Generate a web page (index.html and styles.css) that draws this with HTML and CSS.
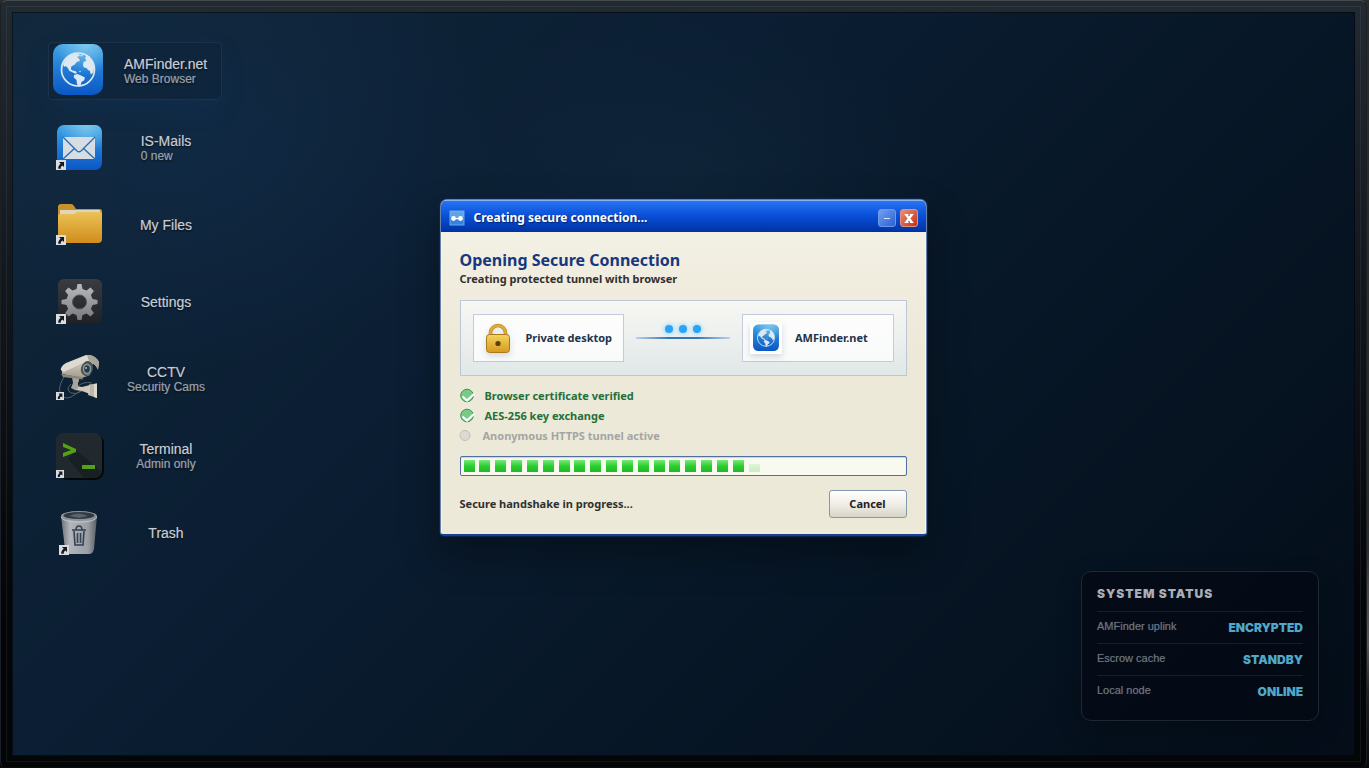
FILE: index.html
```html
<!DOCTYPE html>
<html lang="en">
<head>
<meta charset="utf-8">
<title>Private desktop</title>
<link rel="stylesheet" href="styles.css">
</head>
<body>
<svg class="defs" aria-hidden="true">
  <defs>
    <linearGradient id="blue" x1="0" y1="0" x2="0" y2="1"><stop offset="0" stop-color="#43a5e6"/><stop offset=".45" stop-color="#237fd6"/><stop offset="1" stop-color="#0b57c4"/></linearGradient>
    <radialGradient id="shine" cx=".65" cy="0" r=".6"><stop offset="0" stop-color="#8fd4ee" stop-opacity=".75"/><stop offset="1" stop-color="#8fd4ee" stop-opacity="0"/></radialGradient>
    <linearGradient id="gold" x1="0" y1="0" x2="0" y2="1"><stop offset="0" stop-color="#ebc256"/><stop offset="1" stop-color="#d08d1c"/></linearGradient>
    <linearGradient id="dark" x1="0" y1="0" x2="0" y2="1"><stop offset="0" stop-color="#393c42"/><stop offset="1" stop-color="#202226"/></linearGradient>
    <linearGradient id="steel" x1="0" y1="0" x2="0" y2="1"><stop offset="0" stop-color="#b9bbbd"/><stop offset="1" stop-color="#77797c"/></linearGradient>
    <linearGradient id="can" x1="0" y1="0" x2="1" y2="0"><stop offset="0" stop-color="#6d737a"/><stop offset=".25" stop-color="#b2b5b9"/><stop offset=".75" stop-color="#9a9ea4"/><stop offset="1" stop-color="#565d66"/></linearGradient>
    <linearGradient id="camera" x1="0" y1="0" x2="0" y2="1"><stop offset="0" stop-color="#d6d0c5"/><stop offset="1" stop-color="#a39d90"/></linearGradient>
    <symbol id="globe" viewBox="0 0 52 54">
      <rect x="1" y="1" width="50" height="51" rx="10" fill="url(#blue)"/>
      <rect x="1" y="1" width="50" height="51" rx="10" fill="url(#shine)"/>
      <circle cx="26" cy="26.500" r="16.500" fill="none" stroke="#dce8f2" stroke-width="1.700"/>
      <g fill="#dce8f2">
        <path d="M11 21l3-5 4-3.500 5-2 4 .5 1 2-3 1 2 1.500 1 2.500-3 .8-2.500 3-3 1.500-.7 2.700 1.700 1.500 3 .5 1.500 2-1.500.8-3-1.600-3-1.300-2-3.400-2-1.500-1.500 1z"/>
        <path d="M22 32l3.500-1 3.500 1.500 4 2-1 3-2.500 1.500-1 3.500-2 1.500-1.700-3.500-.3-3.500-2.700-2.500z"/>
        <path d="M31 22.500l.5-3.500 3-1.500-1.500-2 1.500-3.500 3 1.500 3.500 5 1.200 6-1 5-2.500 2-.7-3.500-2-1-1.500-2-2.500-.5z"/>
        <circle cx="29.500" cy="12.500" r="1.100"/><circle cx="28" cy="28.500" r=".8"/>
      </g>
    </symbol>
    <symbol id="shortcut" viewBox="0 0 10 10">
      <rect width="10" height="10" fill="#d9dde0"/>
      <path d="M3 2h5v5L6.400 5.500C5 6.500 4.600 7.300 4.800 8.800H2.300C2 6.600 3 5 4.700 3.800z" fill="#14181f"/>
    </symbol>
  </defs>
</svg>

<div class="monitor">
  <main class="screen">
    <nav class="shortcuts" aria-label="Desktop shortcuts">
      <a class="shortcut selected" href="#browser">
        <svg class="icon large" viewBox="0 0 52 54"><use href="#globe"/></svg>
        <span class="label"><span class="name">AMFinder.net</span><span class="note">Web Browser</span></span>
      </a>
      <a class="shortcut" href="#mails">
        <svg class="icon" viewBox="0 0 48 48">
          <rect x="1" y="1" width="45" height="45" rx="7" fill="url(#blue)"/><rect x="1" y="1" width="45" height="45" rx="7" fill="url(#shine)"/>
          <rect x="7" y="13" width="32" height="22" rx="1" fill="#d7dde3"/>
          <path d="M7 13l14 14q2 1.500 4 0l14-14M7 35l12-11M39 35L27 24" fill="none" stroke="#2771b9" stroke-width="1.400"/>
          <use href="#shortcut" x="0" y="36" width="10" height="10"/>
        </svg>
        <span class="label left"><span class="name">IS-Mails</span><span class="note">0 new</span></span>
      </a>
      <a class="shortcut" href="#files">
        <svg class="icon" viewBox="0 0 48 48">
          <path d="M2 6q0-3 3-3h10q2 0 3 2l2 3h23q3 0 3 2v8H2z" fill="#c8922a"/>
          <path d="M4 9h40v9H4z" fill="#dfd7bd"/>
          <path d="M2 15q0-2 2-2h14l3-2h23q2 0 2 2v25q0 4-4 4H6q-4 0-4-3z" fill="url(#gold)"/>
          <use href="#shortcut" x="0" y="34" width="10" height="10"/>
        </svg>
        <span class="label"><span class="name">My Files</span></span>
      </a>
      <a class="shortcut" href="#settings">
        <svg class="icon" viewBox="0 0 48 48">
          <rect x="2" y="1" width="44" height="44" rx="6" fill="url(#dark)"/>
          <path fill="url(#steel)" fill-rule="evenodd" d="M21.500 6h4l1 5 4 1.600 4-3 3.400 3.400-3 4 1.600 4 5 1v4l-5 1-1.600 4 3 4-3.400 3.400-4-3-4 1.600-1 5h-4l-1-5-4-1.600-4 3-3.400-3.400 3-4-1.600-4-5-1v-4l5-1 1.600-4-3-4 3.400-3.400 4 3 4-1.600zM23.500 17a7 7 0 1 0 0 14a7 7 0 1 0 0-14z"/>
          <circle cx="23.500" cy="24" r="7" fill="none" stroke="#505257"/>
          <use href="#shortcut" x="0" y="36" width="10" height="10"/>
        </svg>
        <span class="label"><span class="name">Settings</span></span>
      </a>
      <a class="shortcut" href="#cctv">
        <svg class="icon" viewBox="0 0 48 48">
          <path d="M8 22Q1 33 5 39q3 6 10 3 7-5 13-7M15 29q-6 5 0 9 5 2 10-2M21 32q6-6 15-4" fill="none" stroke="#53606b"/>
          <path d="M33 29.500l8-1v14.500l-9-3z" fill="#bdb7aa"/><path d="M38 29l3-.5v14.500l-3-1z" fill="#ded9ce"/>
          <path d="M20 31l6 1 8-2v9l-8-3-7-1z" fill="#d0cabe"/>
          <path d="M16 22h7v4l-1 2v6l-3 1-4-2 2-5z" fill="#aaa498"/>
          <path d="M7 14L27 4l10 3-3 13-8 3-20-4q-1-3 1-5z" fill="url(#camera)"/>
          <path d="M5 19l21 3 1 2.500L7 22z" fill="#8c867a"/>
          <path d="M5 13q1-3 5-5L30 0q8-1 13 7l-1 7q-3-6-11-8L8 17q-4-1-3-4z" fill="#dedad0"/>
          <path d="M31 0q10 0 12 8l-1 7q-3-7-9-9z" fill="#aaa59a"/>
          <ellipse cx="31" cy="13.500" rx="6" ry="7.500" transform="rotate(18 31 13.500)" fill="#4b5154"/><ellipse cx="31" cy="14" rx="4.300" ry="5.500" fill="#8c9896"/><ellipse cx="31" cy="14" rx="2.800" ry="3.800" fill="#233e4c"/><circle cx="30" cy="13" r="1" fill="#93c3cc"/>
          <use href="#shortcut" x="0" y="37" width="8" height="8"/>
        </svg>
        <span class="label"><span class="name">CCTV</span><span class="note">Security Cams</span></span>
      </a>
      <a class="shortcut" href="#terminal">
        <svg class="icon" viewBox="0 0 48 48">
          <rect x="2" y="2" width="46" height="46" rx="9" fill="#050708"/><rect x="0" y="1" width="46" height="45" rx="8" fill="#22292e"/>
          <path d="M20 18l26 22q-1 6-9 6h-9L12 27z" fill="#192024"/>
          <path d="M7 11l13 6v3L7 25v-4l8-3-8-3zM26 33h13v4H26z" fill="#54a114"/>
          <use href="#shortcut" x="0" y="38" width="8" height="8"/>
        </svg>
        <span class="label"><span class="name">Terminal</span><span class="note">Admin only</span></span>
      </a>
      <a class="shortcut" href="#trash">
        <svg class="icon" viewBox="0 0 48 48">
          <path d="M5 7h36l-3 33q-1 5-5 5H14q-4 0-5-5z" fill="url(#can)"/>
          <ellipse cx="23" cy="7" rx="18" ry="5" fill="#8e949a"/><ellipse cx="23" cy="6.500" rx="15.500" ry="3.500" fill="#303943"/><path d="M13 7q9-5 19 0l-9 2z" fill="#59636d"/>
          <path d="M5 8q2 5 18 5t18-5" fill="none" stroke="#c4c7ca"/>
          <g fill="none" stroke="#344252" stroke-width="1.600"><path d="M16 21h14M18 22l1 14h8l1-14M20 21q0-4 3-4t3 4M21.500 24v10M24.500 24v10"/></g>
          <use href="#shortcut" x="3" y="36" width="10" height="10"/>
        </svg>
        <span class="label"><span class="name">Trash</span></span>
      </a>
    </nav>

    <section class="window" role="dialog" aria-labelledby="window-title">
      <header class="titlebar">
        <svg class="app-icon" viewBox="0 0 16 16"><rect x="1" y="1" width="14" height="14" fill="#3484de" stroke="#61a9ed"/><path d="M1 1h14v6H1z" fill="#8bc2ed" opacity=".5"/><path d="M4 8.500h8" stroke="#fff" stroke-width="1.500"/><circle cx="4.500" cy="8.500" r="2.400" fill="#fff"/><circle cx="11.500" cy="8.500" r="2.400" fill="#fff"/></svg>
        <h1 id="window-title">Creating secure connection...</h1>
        <button class="control" type="button" aria-label="Minimize"><svg viewBox="0 0 16 16"><path d="M5 8.500h6" stroke="#d7e8ff"/></svg></button>
        <button class="control close" type="button" aria-label="Close"><svg viewBox="0 0 16 16"><path d="M5 4.500l6 8M11 4.500l-6 8" stroke="#fff" stroke-width="2.200"/><path d="M3.500 4.500h4M9 4.500h3.500M3.500 12.500h4M9 12.500h3.500" stroke="#fff"/></svg></button>
      </header>
      <div class="content">
        <h2>Opening Secure Connection</h2>
        <p class="subtitle">Creating protected tunnel with browser</p>
        <div class="tunnel">
          <div class="endpoint">
            <svg viewBox="0 0 30 34"><path d="M7.500 14v-2a7.500 7.500 0 0 1 15 0v2" fill="none" stroke="#b9821a" stroke-width="3.600"/><path d="M7.500 14v-2a7.500 7.500 0 0 1 15 0v2" fill="none" stroke="#e0aa35" stroke-width="2.400"/><rect x="3.500" y="13.500" width="23" height="18" rx="3" fill="url(#padlock)" stroke="#a8781a"/><circle cx="15" cy="22.500" r="2.600" fill="#5d3f05"/><defs><linearGradient id="padlock" x2="0" y2="1"><stop stop-color="#f4d45e"/><stop offset="1" stop-color="#d49a1e"/></linearGradient></defs></svg>
            <span>Private desktop</span>
          </div>
          <div class="link"><i></i><i></i><i></i></div>
          <div class="endpoint">
            <svg class="site" viewBox="0 0 52 54"><use href="#globe"/></svg>
            <span>AMFinder.net</span>
          </div>
        </div>
        <ul class="steps">
          <li><svg viewBox="0 0 16 16"><circle cx="7" cy="7.500" r="6.300" fill="#78ca87" stroke="#3f9451"/><path d="M2.500 8.500l4.500 4 7-6.500" fill="none" stroke="#fff" stroke-width="2.200"/></svg>Browser certificate verified</li>
          <li><svg viewBox="0 0 16 16"><circle cx="7" cy="7.500" r="6.300" fill="#78ca87" stroke="#3f9451"/><path d="M2.500 8.500l4.500 4 7-6.500" fill="none" stroke="#fff" stroke-width="2.200"/></svg>AES-256 key exchange</li>
          <li class="pending"><svg viewBox="0 0 16 16"><circle cx="5" cy="7.500" r="5" fill="#dcdbd2" stroke="#bfbfb5"/></svg>Anonymous HTTPS tunnel active</li>
        </ul>
        <div class="progress" role="progressbar" aria-label="Connection progress" aria-valuenow="67" aria-valuemin="0" aria-valuemax="100">
          <div class="fill" style="width:67.5%"><i></i><i></i><i></i><i></i><i></i><i></i><i></i><i></i><i></i><i></i><i></i><i></i><i></i><i></i><i></i><i></i><i></i><i></i><i class="next"></i></div>
        </div>
        <footer class="actions"><span>Secure handshake in progress...</span><button class="cancel" type="button">Cancel</button></footer>
      </div>
    </section>

    <aside class="status">
      <h2>SYSTEM STATUS</h2>
      <dl>
        <div><dt>AMFinder uplink</dt><dd>ENCRYPTED</dd></div>
        <div><dt>Escrow cache</dt><dd>STANDBY</dd></div>
        <div><dt>Local node</dt><dd>ONLINE</dd></div>
      </dl>
    </aside>
  </main>
</div>
</body>
</html>
```

FILE: styles.css
```css
* { box-sizing: border-box; }
body {
  margin: 0;
  min-height: 100vh;
  display: flex;
  padding-right: 2px;
  background: linear-gradient(#2a2c29 0 66%, #2e2f31 72%, #454545 76%, #555 84%, #222 90%, #08090b);
  font-family: "Liberation Sans", Arial, sans-serif;
}
h1, h2, p, ul, dl, dd { margin: 0; padding: 0; }
.defs { position: absolute; width: 0; height: 0; }
.monitor {
  flex: 1;
  display: flex;
  padding: 6px;
  border: 1px solid #1b2026;
  border-top-color: #454a4e;
  border-bottom-color: #080a0c;
  border-radius: 7px;
  background: linear-gradient(#222a32, #11161b 40%, #030507 80%);
}
.screen {
  position: relative;
  flex: 1;
  min-width: 0;
  padding: 30px 36px;
  border: 5px solid transparent;
  outline: 1px solid rgba(110, 120, 130, .16);
  background:
    radial-gradient(ellipse 300px 230px at 14% 17%, rgba(20, 53, 91, .35), transparent),
    radial-gradient(ellipse 260px 160px at 50% 22%, rgba(30, 60, 80, .22), transparent),
    linear-gradient(135deg, #11273a 0%, #0b1e33 35%, #071727 62%, #040d18 100%);
  background-clip: padding-box;
  box-shadow: inset 0 0 0 1px rgba(0, 0, 0, .5);
}

.shortcuts { display: flex; flex-direction: column; align-items: flex-start; gap: 19px; }
.shortcut {
  width: 174px;
  height: 58px;
  display: flex;
  align-items: center;
  padding: 0 7px;
  border: 1px solid transparent;
  border-radius: 5px;
  color: #c3cbd4;
  text-decoration: none;
}
.shortcut.selected {
  padding: 0 3px;
  border-color: rgba(130, 150, 170, .13);
  background: rgba(8, 23, 43, .15);
  box-shadow: 0 10px 22px rgba(18, 58, 108, .2);
}
.icon { flex: none; width: 48px; height: 48px; }
.icon.large { width: 52px; height: 54px; margin-bottom: 2px; }
.label {
  flex: 1;
  display: flex;
  flex-direction: column;
  align-items: center;
  padding-left: 14px;
  text-shadow: 0 0 1px rgba(195, 203, 212, .5), 0 1px 2px #000;
}
.selected .label { align-items: flex-start; padding-left: 20px; }
.label.left { display: grid; justify-content: center; justify-items: start; }
.name { font-size: 14px; line-height: 16px; }
.note { font-size: 12px; line-height: 14px; color: #929eaa; }

.window {
  position: absolute;
  top: 187px;
  left: calc(50% - 244px);
  width: 487px;
  overflow: hidden;
  border: 1px solid #6680ab;
  border-bottom: 2px solid #174292;
  border-radius: 7px 7px 4px 4px;
  background: linear-gradient(#f5f2e8, #ece9d8 45%);
  box-shadow: inset 1px 0 #eff6ff, inset -1px 0 #eff6ff, 0 0 0 1px #0b244c, 0 18px 38px rgba(0, 0, 0, .35);
  font: bold 11px/16px "Noto Sans", Tahoma, sans-serif;
  color: #303030;
}
.titlebar {
  height: 32px;
  display: flex;
  align-items: center;
  gap: 4px;
  padding: 2px 8px 0;
  border-top: 1px solid #8ab2ed;
  background: linear-gradient(#2874f4, #0a51d9 45%, #0032a5);
  color: #fff;
}
.titlebar h1 { flex: 1; padding-left: 5px; font-size: 12px; line-height: 16px; text-shadow: 1px 1px 1px #002574; }
.app-icon { width: 16px; height: 16px; }
.control {
  width: 18px;
  height: 18px;
  padding: 0;
  border: 1px solid #6d99e9;
  border-radius: 3px;
  background: linear-gradient(135deg, #739ff1, #2b62d4);
}
.control svg { display: block; width: 16px; height: 16px; }
.control.close { border-color: #e19383; background: linear-gradient(135deg, #ec8e72, #c53017); }
.content { padding: 17px 19px 16px; }
.content h2 { font-size: 16px; line-height: 22px; color: #17377e; }
.tunnel {
  display: grid;
  grid-template-columns: 1fr 94px 1fr;
  gap: 12px;
  margin-top: 13px;
  padding: 13px 12px;
  border: 1px solid #bdc6d4;
  background: linear-gradient(#f7f7f3, #e1e8e8);
}
.endpoint {
  height: 48px;
  display: flex;
  align-items: center;
  gap: 13px;
  padding: 0 9px;
  border: 1px solid #c2cadc;
  background: rgba(255, 255, 255, .75);
  color: #22324a;
  white-space: nowrap;
}
.endpoint svg { flex: none; width: 30px; height: 34px; filter: drop-shadow(0 3px 3px rgba(70, 85, 110, .2)); }
.endpoint .site { width: 32px; height: 32px; margin: 0 0 0 -2px; padding: 2px; background: #fff; }
.link {
  height: 25px;
  display: flex;
  justify-content: center;
  align-items: center;
  gap: 6px;
  padding: 10px 0 4px;
  border-bottom: 2px solid;
  border-image: linear-gradient(90deg, #bed4ed, #3775b8 35%, #3775b8 65%, #bed4ed) 1;
}
.link i { width: 8px; height: 8px; border-radius: 50%; background: #2aa4f4; box-shadow: 0 0 5px #61c6ff; }
.steps { margin-top: 10px; list-style: none; color: #24703c; }
.steps li { height: 20px; display: flex; align-items: center; gap: 9px; }
.steps svg { width: 16px; height: 16px; overflow: visible; }
.steps .pending { gap: 7px; color: #a3a5a4; }
.progress {
  height: 20px;
  margin-top: 10px;
  padding: 3px;
  border: 1px solid #516f9f;
  border-radius: 2px;
  background: #f8faef;
  box-shadow: inset 0 1px 1px #cbd2cc;
}
.fill { height: 12px; display: flex; justify-content: space-between; }
.fill i { width: 11px; background: linear-gradient(#7be878, #2bd02f 50%, #25b529); }
.fill .next { height: 8px; align-self: flex-end; opacity: .2; }
.actions { display: flex; align-items: center; justify-content: space-between; margin-top: 14px; }
.cancel {
  width: 78px;
  height: 28px;
  border: 1px solid #8297b0;
  border-radius: 3px;
  background: linear-gradient(#fff, #f0eee7 50%, #d8d4c6);
  font: inherit;
  color: #222;
}

.status {
  position: absolute;
  right: 36px;
  bottom: 35px;
  width: 238px;
  height: 150px;
  padding: 14px 15px;
  border: 1px solid #1b2933;
  border-radius: 10px;
  background: rgba(4, 9, 19, .7);
  box-shadow: 0 8px 25px rgba(0, 0, 0, .25);
}
.status h2, .status dd { font: 900 12px/16px Inter, "Arial Black", sans-serif; }
.status h2 { padding-bottom: 9px; letter-spacing: 1px; color: #aaafb7; }
.status dl div { height: 32px; display: flex; justify-content: space-between; border-top: 1px solid #131f2a; }
.status dt { padding-top: 6px; font-size: 11px; line-height: 16px; color: #6d7680; text-shadow: 0 0 1px rgba(109, 118, 128, .5); }
.status dd { padding-top: 8px; color: #50a8ca; }
```
